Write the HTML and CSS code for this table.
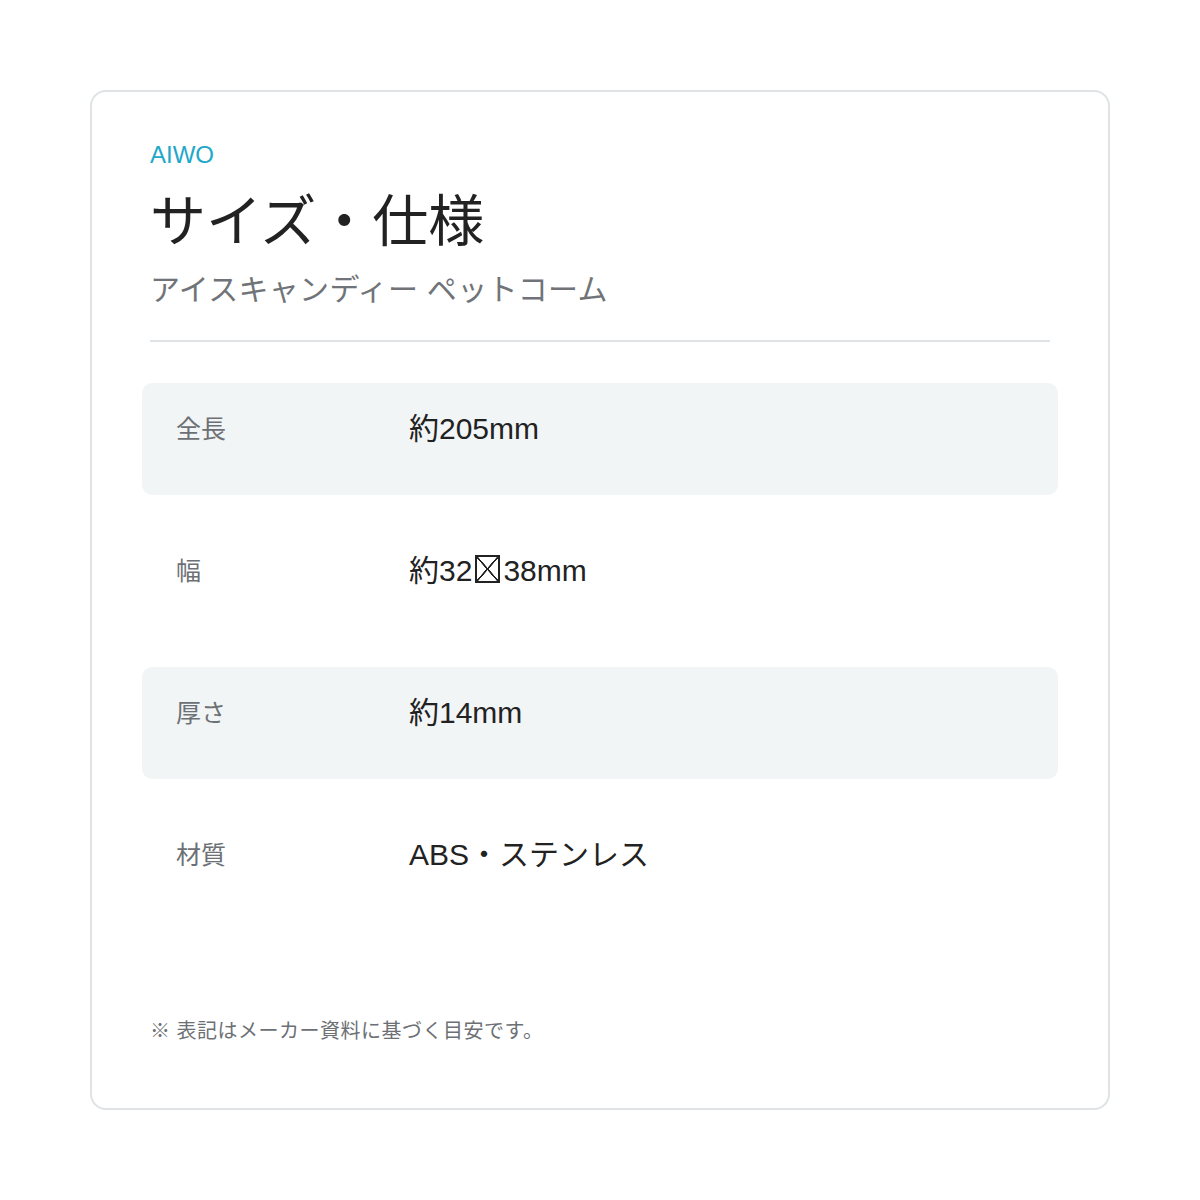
FILE: index.html
```html
<!DOCTYPE html>
<html lang="ja">
<head>
  <meta charset="utf-8">
  <meta name="viewport" content="width=device-width, initial-scale=1">
  <title>サイズ・仕様</title>

  <link rel="stylesheet" href="styles.css">
</head>
<body>

  <div class="page">
    <div class="specCard">

      <div class="specHeader">
        <p class="brand">AIWO</p>
        <h1 class="title">サイズ・仕様</h1>
        <p class="subtitle">アイスキャンディー ペットコーム</p>
      </div>

      <div class="specRows">
        <div class="specRow shaded">
          <div class="specLabel">全長</div>
          <div class="specValue">約205mm</div>
        </div>
        <div class="specRow">
          <div class="specLabel">幅</div>
          <div class="specValue">約32<span class="tofu">×</span>38mm</div>
        </div>
        <div class="specRow shaded">
          <div class="specLabel">厚さ</div>
          <div class="specValue">約14mm</div>
        </div>
        <div class="specRow">
          <div class="specLabel">材質</div>
          <div class="specValue">ABS・ステンレス</div>
        </div>
      </div>

      <p class="note">※ 表記はメーカー資料に基づく目安です。</p>

    </div>
  </div>

</body>
</html>
```

FILE: styles.css
```css
html, body {
  margin: 0;
  padding: 0;
  background: white;
}

body {
  font-family: "Liberation Sans", "Noto Sans CJK JP", sans-serif;
  color: #222;
}

.page {
  padding: 90px;
}

.specCard {
  border: 2px solid #dfe3e6;
  border-radius: 16px;
  padding: 48px 58px 62px 58px;
  min-height: 906px;
  display: flex;
  flex-direction: column;
}

.specHeader {
  border-bottom: 2px solid #dfe3e6;
  padding-bottom: 30px;
}

.brand {
  margin: 0;
  font-size: 24px;
  line-height: 30px;
  color: #1ea8c9;
}

.title {
  margin: 19px 0 0 0;
  font-size: 56px;
  line-height: 66px;
  font-weight: normal;
  color: #222;
}

.subtitle {
  margin: 15px 0 0 0;
  font-size: 30px;
  line-height: 40px;
  letter-spacing: 0.3px;
  color: #707478;
}

.specRows {
  margin: 41px -8px 0 -8px;
  display: flex;
  flex-direction: column;
  gap: 30px;
}

.specRow {
  display: flex;
  align-items: flex-start;
  height: 112px;
  padding: 26px 34px 0 34px;
  box-sizing: border-box;
  border-radius: 10px;
}

.specRow.shaded {
  background: #f2f5f6;
}

.specLabel {
  width: 233px;
  flex-shrink: 0;
  font-size: 25px;
  line-height: 40px;
  color: #6c7075;
}

.specValue {
  font-size: 30px;
  line-height: 40px;
  color: #222;
}

/* missing-glyph box, as the original renders it */
.tofu {
  display: inline-block;
  overflow: hidden;
  width: 25px;
  height: 28px;
  box-sizing: border-box;
  margin: 0 3px 0 3px;
  border: 2px solid #222;
  vertical-align: -2px;
  font-size: 16px;
  line-height: 24px;
  text-align: center;
  color: transparent;
  background:
    linear-gradient(to top right, transparent calc(50% - 1px), #222 calc(50% - 0.6px), #222 calc(50% + 0.6px), transparent calc(50% + 1px)),
    linear-gradient(to bottom right, transparent calc(50% - 1px), #222 calc(50% - 0.6px), #222 calc(50% + 0.6px), transparent calc(50% + 1px));
}

.note {
  margin: auto 0 0 0;
  font-size: 20px;
  line-height: 30px;
  letter-spacing: 0.5px;
  color: #6c7075;
}
```
